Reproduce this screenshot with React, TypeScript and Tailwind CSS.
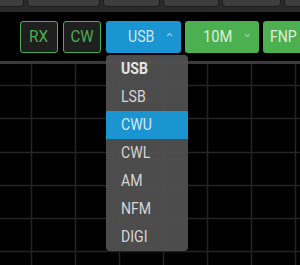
import React from "react";

const font = { fontFamily: "Roboto, 'Liberation Sans', sans-serif" };

function Grid() {
  const vs = [31, 75, 119, 163, 207, 251, 295];
  const hs = [21, 54, 88, 121, 154, 187];
  return (
    <svg width="300" height="201" className="block">
      {vs.map((x) => (
        <line key={"v" + x} x1={x + 0.5} y1={0} x2={x + 0.5} y2={201} stroke="#242424" strokeWidth={1.5} />
      ))}
      {hs.map((y) => (
        <line key={"h" + y} x1={0} y1={y + 0.5} x2={300} y2={y + 0.5} stroke="#242424" strokeWidth={1.5} />
      ))}
    </svg>
  );
}

function Chevron({ up, color }: { up?: boolean; color: string }) {
  return (
    <svg width="7" height="5" viewBox="0 0 7 5" className="block">
      <path
        d={up ? "M1 4 L3.5 1.5 L6 4" : "M1 1 L3.5 3.5 L6 1"}
        fill="none"
        stroke={color}
        strokeWidth={1.4}
      />
    </svg>
  );
}

const items = ["USB", "LSB", "CWU", "CWL", "AM", "NFM", "DIGI"];

export default function App() {
  return (
    <div className="relative w-[300px] h-[265px] bg-black overflow-hidden" style={font}>
      {/* top bar */}
      <div className="h-[12px] bg-[#2a2a2a] overflow-hidden flex gap-[3px] -ml-[20px]">
        {[
          { w: 44, t: "RX" },
          { w: 73, t: "USB ˄" },
          { w: 57, t: "AF" },
          { w: 56, t: "AM" },
          { w: 59, t: "RX" },
          { w: 40, t: "" },
        ].map((b, i) => (
          <div
            key={i}
            className="shrink-0 h-[26px] -mt-[19px] rounded-[4px] bg-[#3d3d3d] border border-[#1c1c1c] flex items-center justify-center text-[15px] text-[#aaa] leading-none"
            style={{ width: b.w }}
          >
            {b.t}
          </div>
        ))}
      </div>

      {/* main buttons */}
      <div className="flex items-center mt-[9px] pl-[20px] gap-[4px] h-[32px]">
        <div className="w-[38px] h-[32px] shrink-0 rounded-[3px] border-[1.5px] border-[#4caf50] bg-[#1f1f1f] text-[#4caf50] text-[17px] flex items-center justify-center">
          <span className="inline-block scale-x-[0.9]">RX</span>
        </div>
        <div className="w-[38px] h-[32px] shrink-0 ml-[1px] rounded-[3px] border-[1.5px] border-[#4caf50] bg-[#1f1f1f] text-[#4caf50] text-[17px] flex items-center justify-center">
          <span className="inline-block scale-x-[0.88]">CW</span>
        </div>
        <div className="w-[75px] h-[32px] shrink-0 ml-[1px] rounded-[3px] bg-[#1a95d2] text-[#d3e6f0] text-[16px] flex items-center pl-[22px]">
          <span className="inline-block origin-left scale-x-[0.88] w-[30px]">USB</span>
          <span className="-mt-[5px] ml-[8px]">
            <Chevron up color="#8cc3de" />
          </span>
        </div>
        <div className="w-[74px] h-[32px] shrink-0 rounded-[3px] bg-[#4caf50] text-[#dcefdc] text-[16px] flex items-center pl-[18px]">
          <span className="inline-block origin-left scale-x-[0.92] w-[33px]">10M</span>
          <span className="-mt-[3px] ml-[8px]">
            <Chevron color="#9cc39c" />
          </span>
        </div>
        <div className="w-[50px] h-[32px] shrink-0 rounded-[3px] bg-[#4caf50] text-[#dcefdc] text-[16px] flex items-center pl-[7px]">
          <span className="inline-block origin-left scale-x-[0.88]">FNP</span>
        </div>
      </div>

      {/* separator */}
      <div className="mt-[8px] h-[3px] bg-[#3a3a3a]" />

      {/* chart grid */}
      <Grid />

      {/* dropdown */}
      <div className="absolute left-[106px] top-[55px] w-[82px] rounded-[4px] bg-[rgba(82,82,82,0.93)] overflow-hidden">
        {items.map((it, i) => (
          <div
            key={it}
            className={
              "h-[28px] flex items-center pl-[15px] text-[16px] " +
              (i === 2 ? "bg-[#1a95d2] text-[#d8e8f0]" : "text-[#d6d6d6]") +
              (i === 0 ? " font-bold text-[#e4e4e4]" : "")
            }
          >
            <span className="inline-block origin-left scale-x-[0.88]">{it}</span>
          </div>
        ))}
      </div>
    </div>
  );
}
